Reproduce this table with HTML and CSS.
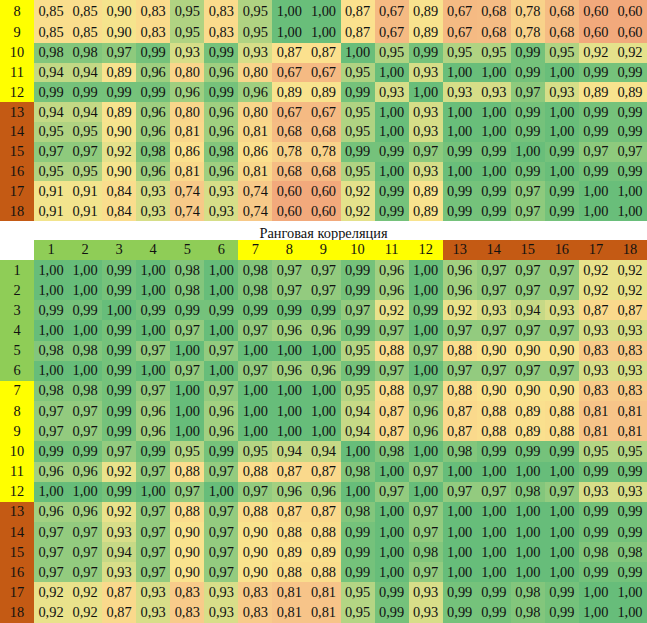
FILE: index.html
```html
<!DOCTYPE html>
<html lang="ru">
<head>
<meta charset="utf-8">
<title>Ранговая корреляция</title>
<link rel="stylesheet" href="styles.css">
</head>
<body>
<div class="sheet">
  <div class="matrix top" id="top"></div>
  <div class="title">Ранговая корреляция</div>
  <div class="matrix bottom" id="bottom"></div>
</div>
<script src="script.js"></script>
</body>
</html>
```

FILE: styles.css
```css
html, body {
  margin: 0;
  padding: 0;
  background: #ffffff;
}
body {
  font-family: "Liberation Serif", "Times New Roman", serif;
  font-size: 14.4px;
  color: #111111;
  width: 647px;
  height: 623px;
  overflow: hidden;
}
.sheet {
  display: flex;
  flex-direction: column;
}
.matrix {
  display: grid;
  grid-template-columns: 34px repeat(18, 1fr);
}
.top {
  grid-template-rows: 23px repeat(10, 19.8px);
}
.bottom {
  grid-template-rows: 20px repeat(18, 20.17px);
}
.title {
  height: 19px;
  line-height: 19px;
  padding-top: 3px;
  box-sizing: border-box;
  text-align: center;
}
.cell {
  display: flex;
  align-items: center;
  justify-content: center;
  white-space: nowrap;
}
.lab-g { background: #8fcd57; }
.lab-y { background: #ffff00; }
.lab-o { background: #c45a14; }
.blank { background: #ffffff; }
```

FILE: script.js
```js
var topData = [
  [8,  "85 85 90 83 95 83 95 100 100 87 67 89 67 68 78 68 60 60"],
  [9,  "85 85 90 83 95 83 95 100 100 87 67 89 67 68 78 68 60 60"],
  [10, "98 98 97 99 93 99 93 87 87 100 95 99 95 95 99 95 92 92"],
  [11, "94 94 89 96 80 96 80 67 67 95 100 93 100 100 99 100 99 99"],
  [12, "99 99 99 99 96 99 96 89 89 99 93 100 93 93 97 93 89 89"],
  [13, "94 94 89 96 80 96 80 67 67 95 100 93 100 100 99 100 99 99"],
  [14, "95 95 90 96 81 96 81 68 68 95 100 93 100 100 99 100 99 99"],
  [15, "97 97 92 98 86 98 86 78 78 99 99 97 99 99 100 99 97 97"],
  [16, "95 95 90 96 81 96 81 68 68 95 100 93 100 100 99 100 99 99"],
  [17, "91 91 84 93 74 93 74 60 60 92 99 89 99 99 97 99 100 100"],
  [18, "91 91 84 93 74 93 74 60 60 92 99 89 99 99 97 99 100 100"]
];
var bottomData = [
  [1,  "100 100 99 100 98 100 98 97 97 99 96 100 96 97 97 97 92 92"],
  [2,  "100 100 99 100 98 100 98 97 97 99 96 100 96 97 97 97 92 92"],
  [3,  "99 99 100 99 99 99 99 99 99 97 92 99 92 93 94 93 87 87"],
  [4,  "100 100 99 100 97 100 97 96 96 99 97 100 97 97 97 97 93 93"],
  [5,  "98 98 99 97 100 97 100 100 100 95 88 97 88 90 90 90 83 83"],
  [6,  "100 100 99 100 97 100 97 96 96 99 97 100 97 97 97 97 93 93"],
  [7,  "98 98 99 97 100 97 100 100 100 95 88 97 88 90 90 90 83 83"],
  [8,  "97 97 99 96 100 96 100 100 100 94 87 96 87 88 89 88 81 81"],
  [9,  "97 97 99 96 100 96 100 100 100 94 87 96 87 88 89 88 81 81"],
  [10, "99 99 97 99 95 99 95 94 94 100 98 100 98 99 99 99 95 95"],
  [11, "96 96 92 97 88 97 88 87 87 98 100 97 100 100 100 100 99 99"],
  [12, "100 100 99 100 97 100 97 96 96 100 97 100 97 97 98 97 93 93"],
  [13, "96 96 92 97 88 97 88 87 87 98 100 97 100 100 100 100 99 99"],
  [14, "97 97 93 97 90 97 90 88 88 99 100 97 100 100 100 100 99 99"],
  [15, "97 97 94 97 90 97 90 89 89 99 100 98 100 100 100 100 98 98"],
  [16, "97 97 93 97 90 97 90 88 88 99 100 97 100 100 100 100 99 99"],
  [17, "92 92 87 93 83 93 83 81 81 95 99 93 99 99 98 99 100 100"],
  [18, "92 92 87 93 83 93 83 81 81 95 99 93 99 99 98 99 100 100"]
];

var topStops = [
  [60, "#f2a97c"], [68, "#f5bc84"], [80, "#f9d68b"], [88, "#fbe38e"],
  [91, "#f2e48d"], [93, "#d6de88"], [95, "#b0d382"], [97, "#8eca7d"], [100, "#69be7a"]
];
var bottomStops = [
  [81, "#f7c489"], [83, "#f8cb8a"], [88, "#fadd8d"], [90, "#f9e38e"],
  [92, "#e9e28b"], [94, "#c6d986"], [96, "#a2d081"], [98, "#83c67c"], [100, "#67bd7a"]
];

function hex(c) {
  return [parseInt(c.substr(1, 2), 16), parseInt(c.substr(3, 2), 16), parseInt(c.substr(5, 2), 16)];
}
function colorFor(v, stops) {
  if (v <= stops[0][0]) return stops[0][1];
  for (var i = 1; i < stops.length; i++) {
    if (v <= stops[i][0]) {
      var a = stops[i - 1], b = stops[i];
      var t = (v - a[0]) / (b[0] - a[0]);
      var ca = hex(a[1]), cb = hex(b[1]);
      var r = [];
      for (var k = 0; k < 3; k++) r.push(Math.round(ca[k] + (cb[k] - ca[k]) * t));
      return "rgb(" + r.join(",") + ")";
    }
  }
  return stops[stops.length - 1][1];
}
function labClass(n) {
  return n <= 6 ? "lab-g" : (n <= 12 ? "lab-y" : "lab-o");
}
function fmt(v) {
  return v === 100 ? "1,00" : "0," + (v < 10 ? "0" + v : v);
}
function cell(parent, cls, text) {
  var d = document.createElement("div");
  d.className = "cell " + cls;
  d.textContent = text;
  parent.appendChild(d);
  return d;
}
function build(id, data, stops, header) {
  var el = document.getElementById(id);
  if (header) {
    cell(el, "blank", "");
    for (var h = 1; h <= 18; h++) cell(el, labClass(h), String(h));
  }
  data.forEach(function (row) {
    cell(el, labClass(row[0]), String(row[0]));
    row[1].split(" ").forEach(function (s) {
      var v = parseInt(s, 10);
      var d = cell(el, "val", fmt(v));
      d.style.backgroundColor = colorFor(v, stops);
    });
  });
}
build("top", topData, topStops, false);
build("bottom", bottomData, bottomStops, true);
```
